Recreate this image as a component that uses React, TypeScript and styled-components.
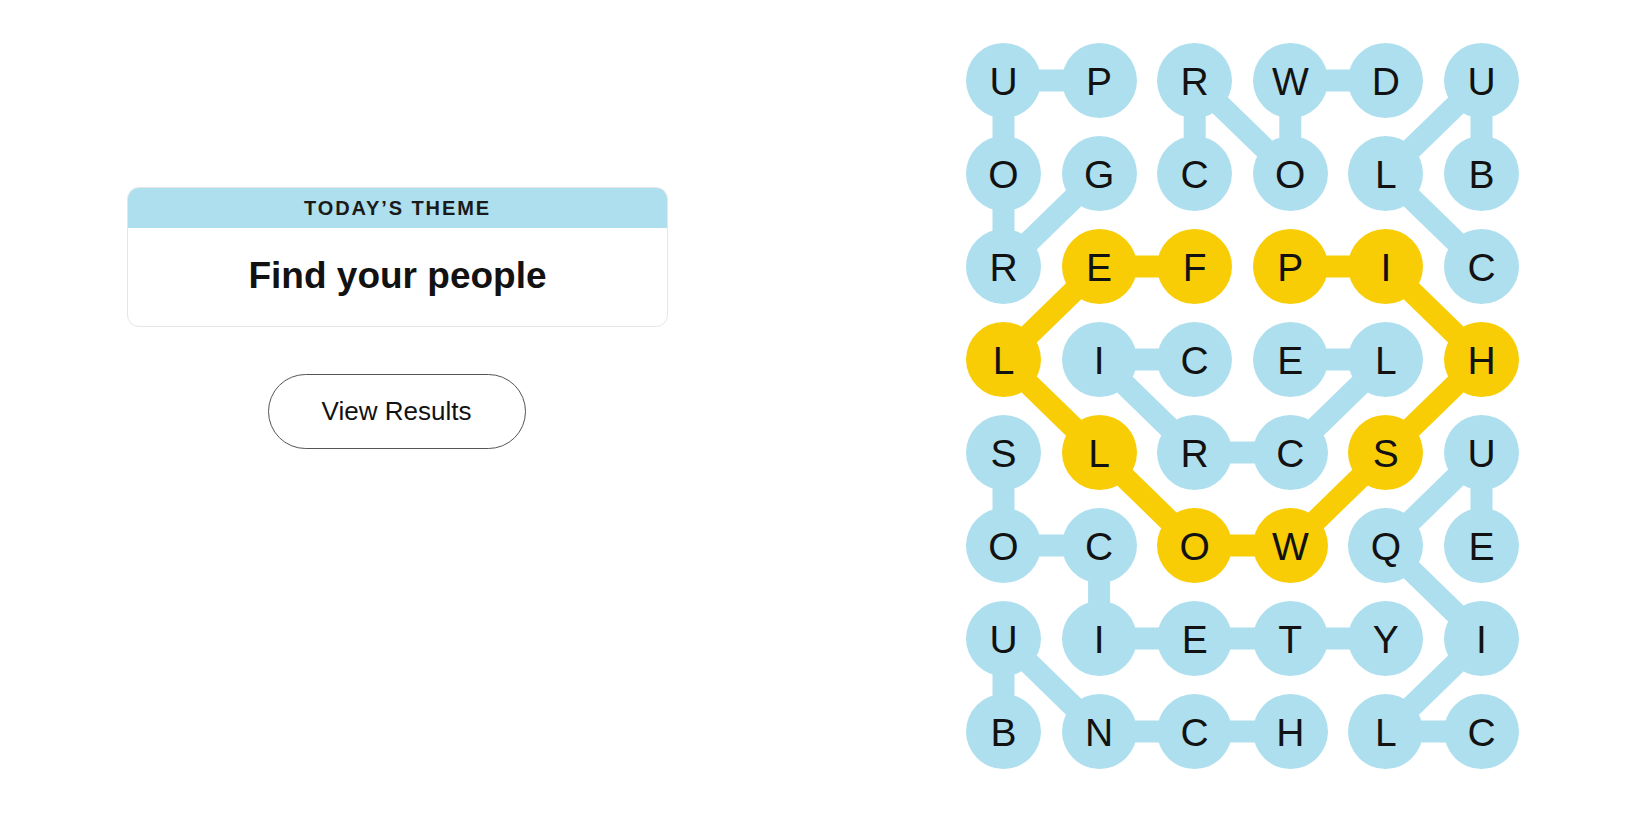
import React from 'react';
import styled, { createGlobalStyle } from 'styled-components';

const GlobalStyle = createGlobalStyle`
  html, body {
    margin: 0;
    padding: 0;
    background: #ffffff;
    font-family: "Liberation Sans", Arial, sans-serif;
    color: #121212;
  }
`;

const BLUE = '#aedfee';
const YELLOW = '#f8cd05';

const CELL = 75;
const COL_GAP = 20.6;
const ROW_GAP = 18;
const COLS = 6;
const ROWS = 8;
const BOARD_W = COLS * CELL + (COLS - 1) * COL_GAP;
const BOARD_H = ROWS * CELL + (ROWS - 1) * ROW_GAP;

const letters = [
  'UPRWDU',
  'OGCOLB',
  'REFPIC',
  'LICELH',
  'SLRCSU',
  'OCOWQE',
  'UIETYI',
  'BNCHLC'
];

type Cell = [number, number];

// found words, as paths of [row, col]
const words: { path: Cell[]; spangram?: boolean }[] = [
  { path: [[1, 1], [2, 0], [1, 0], [0, 0], [0, 1]] }, // GROUP
  { path: [[1, 2], [0, 2], [1, 3], [0, 3], [0, 4]] }, // CROWD
  { path: [[2, 5], [1, 4], [0, 5], [1, 5]] }, // CLUB
  { path: [[3, 2], [3, 1], [4, 2], [4, 3], [3, 4], [3, 3]] }, // CIRCLE
  { path: [[4, 0], [5, 0], [5, 1], [6, 1], [6, 2], [6, 3], [6, 4]] }, // SOCIETY
  { path: [[7, 0], [6, 0], [7, 1], [7, 2], [7, 3]] }, // BUNCH
  { path: [[7, 5], [7, 4], [6, 5], [5, 4], [4, 5], [5, 5]] }, // CLIQUE
  {
    path: [[2, 2], [2, 1], [3, 0], [4, 1], [5, 2], [5, 3], [4, 4], [3, 5], [2, 4], [2, 3]],
    spangram: true
  } // FELLOWSHIP
];

const spangramCells = new Set(
  words.filter(w => w.spangram).flatMap(w => w.path.map(([r, c]) => `${r}-${c}`))
);

const cx = (c: number) => CELL / 2 + c * (CELL + COL_GAP);
const cy = (r: number) => CELL / 2 + r * (CELL + ROW_GAP);

const Page = styled.div`
  display: flex;
  align-items: flex-start;
  padding: 43px 0 0 127px;
  min-height: 825px;
  box-sizing: border-box;
`;

const SidePanel = styled.div`
  width: 541px;
  padding-top: 144px;
  display: flex;
  flex-direction: column;
  align-items: center;
  gap: 47px;
`;

const ThemeCard = styled.div`
  width: 100%;
  height: 140px;
  box-sizing: border-box;
  border: 1px solid #e6e6e6;
  border-radius: 12px;
  overflow: hidden;
  display: flex;
  flex-direction: column;
`;

const ThemeHeader = styled.div`
  height: 40px;
  background: ${BLUE};
  display: flex;
  align-items: center;
  justify-content: center;
  font-size: 20px;
  font-weight: 700;
  letter-spacing: 1.9px;
  color: #1a1a1a;
`;

const ThemeTitle = styled.div`
  flex: 1;
  display: flex;
  align-items: center;
  justify-content: center;
  font-size: 37px;
  font-weight: 700;
  color: #121212;
  padding-bottom: 2px;
`;

const ResultsButton = styled.button`
  width: 258px;
  height: 75px;
  border-radius: 38px;
  border: 1px solid #555555;
  background: #ffffff;
  font-family: "Liberation Sans", Arial, sans-serif;
  font-size: 26px;
  color: #121212;
  cursor: pointer;
  margin-left: -2px;
`;

const Board = styled.div`
  position: relative;
  margin-left: 298px;
  width: ${BOARD_W}px;
  height: ${BOARD_H}px;
`;

const Links = styled.svg`
  position: absolute;
  inset: 0;
`;

const LetterGrid = styled.div`
  position: relative;
  display: grid;
  grid-template-columns: repeat(${COLS}, ${CELL}px);
  grid-auto-rows: ${CELL}px;
  column-gap: ${COL_GAP}px;
  row-gap: ${ROW_GAP}px;
`;

const Letter = styled.div<{ $spangram: boolean }>`
  width: ${CELL}px;
  height: ${CELL}px;
  border-radius: 50%;
  background: ${({ $spangram }) => ($spangram ? YELLOW : BLUE)};
  display: flex;
  align-items: center;
  justify-content: center;
  font-size: 39px;
  color: #121212;
  line-height: 1;
  padding-top: 2px;
  box-sizing: border-box;
`;

export default function App() {
  return (
    <>
      <GlobalStyle />
      <Page>
        <SidePanel>
          <ThemeCard>
            <ThemeHeader>TODAY’S THEME</ThemeHeader>
            <ThemeTitle>Find your people</ThemeTitle>
          </ThemeCard>
          <ResultsButton>View Results</ResultsButton>
        </SidePanel>
        <Board>
          <Links width={BOARD_W} height={BOARD_H} viewBox={`0 0 ${BOARD_W} ${BOARD_H}`}>
            {words.map((w, i) => (
              <polyline
                key={i}
                points={w.path.map(([r, c]) => `${cx(c)},${cy(r)}`).join(' ')}
                fill="none"
                stroke={w.spangram ? YELLOW : BLUE}
                strokeWidth={22}
                strokeLinejoin="round"
              />
            ))}
          </Links>
          <LetterGrid>
            {letters.map((row, r) =>
              row.split('').map((ch, c) => (
                <Letter key={`${r}-${c}`} $spangram={spangramCells.has(`${r}-${c}`)}>
                  {ch}
                </Letter>
              ))
            )}
          </LetterGrid>
        </Board>
      </Page>
    </>
  );
}
